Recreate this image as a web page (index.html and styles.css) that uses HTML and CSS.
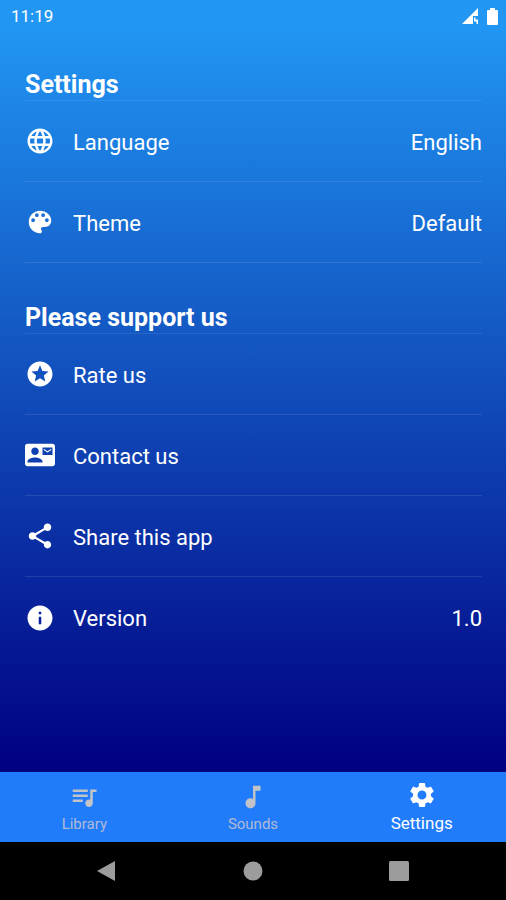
FILE: index.html
```html
<!DOCTYPE html>
<html lang="en">
<head>
<meta charset="utf-8">
<meta name="viewport" content="width=device-width, initial-scale=1">
<title>Settings</title>
<link rel="stylesheet" href="styles.css">
</head>
<body>
<div class="screen">
  <header class="status-bar">
    <time>11:19</time>
    <div class="status-icons">
      <svg class="signal" viewBox="0 0 17 16" aria-hidden="true"><path d="M0 16 16 0v8h-5v8z"/><path d="M12 9.500h1.500v2H16V16h-1.500v-2.500H12z"/></svg>
      <svg class="battery" viewBox="0 0 11 17" aria-hidden="true"><path d="M3 0h5v2h2q1 0 1 1v13q0 1-1 1H1q-1 0-1-1V3q0-1 1-1h2z"/></svg>
    </div>
  </header>

  <main class="content">
    <section class="group">
      <h2>Settings</h2>
      <button class="row" type="button">
        <svg viewBox="0 0 24 24" aria-hidden="true"><path d="M11.99 2C6.47 2 2 6.48 2 12s4.47 10 9.99 10C17.52 22 22 17.52 22 12S17.52 2 11.99 2zm6.93 6h-2.95c-.32-1.25-.78-2.45-1.38-3.56 1.84.63 3.37 1.91 4.33 3.56zM12 4.04c.83 1.2 1.48 2.53 1.91 3.96h-3.82c.43-1.43 1.08-2.76 1.91-3.96zM4.26 14C4.1 13.36 4 12.69 4 12s.1-1.36.26-2h3.38c-.08.66-.14 1.32-.14 2s.06 1.34.14 2H4.26zm.82 2h2.95c.32 1.25.78 2.45 1.38 3.56-1.84-.63-3.37-1.9-4.33-3.56zm2.95-8H5.08c.96-1.66 2.49-2.93 4.33-3.56C8.81 5.55 8.35 6.75 8.03 8zM12 19.96c-.83-1.2-1.48-2.53-1.91-3.96h3.82c-.43 1.43-1.08 2.76-1.91 3.96zM14.34 14H9.66c-.09-.66-.16-1.32-.16-2s.07-1.35.16-2h4.68c.09.65.16 1.32.16 2s-.07 1.34-.16 2zm.25 5.56c.6-1.11 1.06-2.31 1.38-3.56h2.95c-.96 1.65-2.49 2.93-4.33 3.56zM16.36 14c.08-.66.14-1.32.14-2s-.06-1.34-.14-2h3.38c.16.64.26 1.31.26 2s-.1 1.36-.26 2h-3.38z"/></svg>
        <span class="label">Language</span><span>English</span>
      </button>
      <button class="row" type="button">
        <svg viewBox="0 0 24 24" aria-hidden="true"><path d="M12 3c-4.97 0-9 4.03-9 9s4.03 9 9 9c.83 0 1.5-.67 1.5-1.5 0-.39-.15-.74-.39-1.01-.23-.26-.38-.61-.38-.99 0-.83.67-1.5 1.5-1.5H16c2.76 0 5-2.24 5-5 0-4.42-4.03-8-9-8zm-5.5 9c-.83 0-1.5-.67-1.5-1.5S5.67 9 6.500 9 8 9.670 8 10.500 7.330 12 6.500 12zm3-4C8.670 8 8 7.330 8 6.500S8.670 5 9.500 5s1.500.67 1.500 1.500S10.330 8 9.500 8zm5 0c-.83 0-1.500-.67-1.500-1.500S13.670 5 14.500 5s1.500.67 1.500 1.500S15.330 8 14.500 8zm3 4c-.83 0-1.500-.67-1.500-1.500S16.670 9 17.500 9s1.500.67 1.500 1.500-.67 1.500-1.500 1.500z"/></svg>
        <span class="label">Theme</span><span>Default</span>
      </button>
    </section>

    <section class="group">
      <h2>Please support us</h2>
      <button class="row" type="button">
        <svg viewBox="0 0 24 24" aria-hidden="true"><path d="M11.990 2C6.470 2 2 6.480 2 12s4.470 10 9.990 10C17.520 22 22 17.520 22 12S17.520 2 11.990 2zm4.240 16L12 15.450 7.770 18l1.120-4.810-3.730-3.230 4.920-.42L12 5l1.920 4.530 4.920.42-3.730 3.230L16.230 18z"/></svg>
        <span class="label">Rate us</span>
      </button>
      <button class="row" type="button">
        <svg viewBox="0 0 24 24" aria-hidden="true"><path d="M21 8V7l-3 2-3-2v1l3 2 3-2zm1-5H2C.9 3 0 3.900 0 5v14c0 1.100.9 2 2 2h20c1.100 0 1.990-.9 1.990-2L24 5c0-1.100-.9-2-2-2zM8 6c1.660 0 3 1.340 3 3s-1.340 3-3 3-3-1.340-3-3 1.340-3 3-3zm6 12H2v-1c0-2 4-3.100 6-3.100s6 1.100 6 3.100v1zm8-6h-8V6h8v6z"/></svg>
        <span class="label">Contact us</span>
      </button>
      <button class="row" type="button">
        <svg viewBox="0 0 24 24" aria-hidden="true"><path d="M18 16.080c-.76 0-1.440.3-1.960.77L8.910 12.700c.05-.23.09-.46.09-.7s-.04-.47-.09-.7l7.050-4.110c.54.5 1.250.81 2.040.81 1.660 0 3-1.340 3-3s-1.340-3-3-3-3 1.340-3 3c0 .24.04.47.09.7L8.040 9.810C7.500 9.310 6.790 9 6 9c-1.660 0-3 1.340-3 3s1.340 3 3 3c.79 0 1.500-.31 2.040-.81l7.120 4.160c-.05.21-.08.43-.08.65 0 1.610 1.310 2.920 2.920 2.920s2.920-1.310 2.920-2.920-1.310-2.920-2.920-2.920z"/></svg>
        <span class="label">Share this app</span>
      </button>
      <div class="row">
        <svg viewBox="0 0 24 24" aria-hidden="true"><path d="M12 2C6.480 2 2 6.480 2 12s4.480 10 10 10 10-4.480 10-10S17.520 2 12 2zm1 15h-2v-6h2v6zm0-8h-2V7h2v2z"/></svg>
        <span class="label">Version</span><span>1.0</span>
      </div>
    </section>
  </main>
</div>

<nav class="tabs">
  <a class="tab" href="#library">
    <svg viewBox="0 0 24 24" aria-hidden="true"><path d="M15 6H3v2h12V6zm0 4H3v2h12v-2zM3 16h8v-2H3v2zM17 6v8.180c-.31-.11-.65-.18-1-.18-1.660 0-3 1.340-3 3s1.340 3 3 3 3-1.340 3-3V8h3V6h-5z"/></svg>
    <span>Library</span>
  </a>
  <a class="tab" href="#sounds">
    <svg viewBox="0 0 24 24" aria-hidden="true"><path d="M12 3v10.550c-.59-.34-1.270-.55-2-.55-2.210 0-4 1.790-4 4s1.790 4 4 4 4-1.790 4-4V7h4V3h-6z"/></svg>
    <span>Sounds</span>
  </a>
  <a class="tab active" href="#settings" aria-current="page">
    <svg viewBox="0 0 24 24" aria-hidden="true"><path d="M19.140 12.940c.04-.3.060-.61.060-.94 0-.32-.02-.64-.07-.94l2.030-1.580c.18-.14.23-.41.12-.61l-1.920-3.320c-.12-.22-.37-.29-.59-.22l-2.390.96c-.5-.38-1.030-.7-1.620-.94l-.36-2.540c-.04-.24-.24-.41-.48-.41h-3.840c-.24 0-.43.17-.47.41l-.36 2.540c-.59.24-1.130.57-1.620.94l-2.390-.96c-.22-.08-.47 0-.59.22L2.740 8.870c-.12.21-.08.47.12.61l2.030 1.580c-.05.3-.09.63-.09.94s.02.64.07.94l-2.030 1.580c-.18.14-.23.41-.12.61l1.920 3.320c.12.22.37.29.59.22l2.390-.96c.5.38 1.030.7 1.620.94l.36 2.540c.05.24.24.41.48.41h3.840c.24 0 .44-.17.47-.41l.36-2.540c.59-.24 1.130-.56 1.620-.94l2.390.96c.22.08.47 0 .59-.22l1.920-3.320c.12-.22.07-.47-.12-.61l-2.010-1.580zM12 15.600c-1.980 0-3.600-1.620-3.600-3.600s1.620-3.600 3.600-3.600 3.600 1.620 3.600 3.600-1.620 3.600-3.600 3.600z"/></svg>
    <span>Settings</span>
  </a>
</nav>

<div class="system-bar">
  <button type="button" aria-label="Back"><svg viewBox="0 0 20 20"><path d="M0 10 18 0v20z"/></svg></button>
  <button type="button" aria-label="Home"><svg viewBox="0 0 20 20"><circle cx="10" cy="10" r="9.500"/></svg></button>
  <button type="button" aria-label="Recent apps"><svg viewBox="0 0 20 20"><rect width="20" height="20" rx="1.500"/></svg></button>
</div>
</body>
</html>
```
FILE: styles.css
```css
* {
  box-sizing: border-box;
}

body {
  margin: 0;
  min-height: 100vh;
  display: flex;
  flex-direction: column;
  background: #000;
  color: #fff;
  font-family: Roboto, "Liberation Sans", sans-serif;
}

svg {
  display: block;
  fill: currentColor;
}

button {
  border: 0;
  padding: 0;
  background: none;
  color: inherit;
  font: inherit;
  text-align: left;
}

.screen {
  flex: 1;
  background: linear-gradient(#2196f3 24px, #000080);
}

.status-bar {
  display: flex;
  justify-content: space-between;
  align-items: center;
  height: 32px;
  padding: 0 8px 0 11px;
  font-size: 17px;
}

.status-icons {
  display: flex;
  align-items: center;
  gap: 8px;
}

.signal {
  width: 17px;
  height: 16px;
}

.battery {
  width: 11px;
  height: 17px;
}

.content {
  padding: 36px 24px 0 25px;
}

.group {
  margin-bottom: 38px;
}

h2 {
  margin: 0;
  height: 33px;
  border-bottom: 1px solid rgba(255, 255, 255, 0.08);
  font-size: 25px;
  line-height: 34px;
  font-weight: 700;
}

.row {
  display: flex;
  align-items: center;
  gap: 18px;
  width: 100%;
  height: 81px;
  border-bottom: 1px solid rgba(255, 255, 255, 0.1);
  font-size: 22px;
  line-height: 28px;
}

.row svg {
  width: 30px;
  height: 30px;
}

.row span {
  padding-top: 3px;
}

.row:is(div) {
  border-bottom: 0;
}

.label {
  flex: 1;
}

.tabs {
  display: flex;
  height: 70px;
  background: #217cfb;
}

.tab {
  flex: 1;
  display: flex;
  flex-direction: column;
  align-items: center;
  justify-content: center;
  padding-top: 4px;
  color: #b0b9d6;
  font-size: 15px;
  line-height: 24px;
  text-decoration: none;
}

.tab svg {
  width: 30px;
  height: 30px;
  fill: #c2c3c8;
}

.tab.active {
  padding-top: 2px;
  color: #fff;
  font-size: 17px;
  line-height: 26px;
}

.tab.active svg {
  fill: #fff;
}

.system-bar {
  display: flex;
  justify-content: center;
  gap: 126px;
  height: 58px;
  align-items: center;
  color: #9c9c9c;
}

.system-bar svg {
  width: 20px;
  height: 20px;
}
```
